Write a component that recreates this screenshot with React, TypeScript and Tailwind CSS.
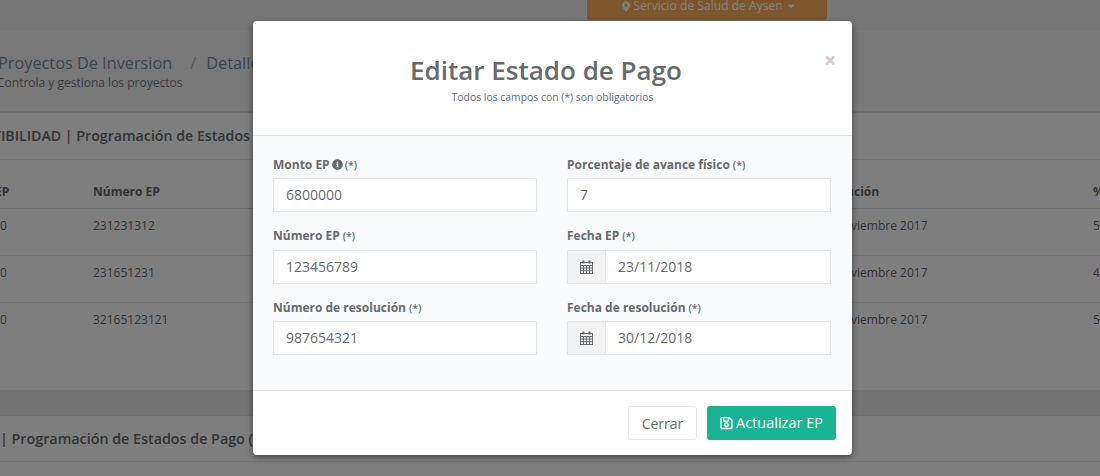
import React from "react";
import { FaMapMarkerAlt, FaCaretDown, FaInfoCircle, FaRegSave } from "react-icons/fa";

const Calendar = () => (
  <svg width="13" height="14" viewBox="0 0 13 14" fill="none" stroke="#676a6c" strokeWidth="1">
    <rect x="0.5" y="2.5" width="12" height="11" />
    <path d="M0.5 5.5h12M0.5 8h12M0.5 10.7h12M3.5 5.5v8M6.5 5.5v8M9.5 5.5v8" />
    <path d="M3.5 0.5v3M9.5 0.5v3" strokeWidth="2" />
  </svg>
);

const Req = () => <span className="text-[10.5px] font-semibold ml-[3px]">(*)</span>;

function Label({ children }: { children: React.ReactNode }) {
  return <label className="block h-[18.5px] mb-[4px] text-[12px] leading-[18.5px] font-bold text-[#676a6c] whitespace-nowrap">{children}</label>;
}

function Field({ label, value, icon }: { label: React.ReactNode; value: string; icon?: boolean }) {
  return (
    <div className="mb-[15px]">
      <Label>{label}</Label>
      <div className="flex h-[34px] border border-[#e5e6e7] bg-white text-[14px] leading-[32px] text-[#676a6c]">
        {icon && (
          <span className="w-[38px] shrink-0 flex items-center justify-center bg-[#f3f3f4] border-r border-[#e5e6e7]">
            <Calendar />
          </span>
        )}
        <span className="px-3">{value}</span>
      </div>
    </div>
  );
}

const rows = [
  ["0", "231231312", "5"],
  ["0", "231651231", "4"],
  ["0", "32165123121", "5"],
];

function BgRow({ a, b, c, d, head, shift }: { a: string; b: string; c: string; d: string; head?: boolean; shift?: boolean }) {
  return (
    <div className={`flex ${head ? "items-end h-[49px] pb-[8px] border-b border-[#dcdee0] font-bold" : "items-start h-[47px] pt-[8px] border-b border-[#e7eaec] last:border-b-0"} text-[12px] leading-[17px] text-[#676a6c] whitespace-nowrap`}>
      <span className={`w-[93px] shrink-0 ${head ? "-ml-[5px]" : ""}`}>{a}</span>
      <span className={`w-[721px] shrink-0 ${head ? "ml-[5px]" : ""}`}>{b}</span>
      <span className={`w-[279px] shrink-0 ${shift ? "pl-[4px]" : ""}`}>{c}</span>
      <span>{d}</span>
    </div>
  );
}

export default function App() {
  return (
    <div className="relative w-[1100px] h-[476px] overflow-hidden bg-[#f3f3f4]" style={{ fontFamily: '"Open Sans", sans-serif' }}>
      <div className="flex justify-end h-[30px] pr-[273px] bg-[#ededee] border-b border-[#e7eaec]">
        <div className="w-[240px] h-[20px] pb-[8px] pl-[4px] flex items-center justify-center gap-[3px] bg-[#f8ac59] rounded-b-[3px] text-white text-[12.1px]">
          <FaMapMarkerAlt className="w-[8px] h-[11px]" />
          <span>Servicio de Salud de Aysen</span>
          <FaCaretDown className="w-[10px] h-[10px]" />
        </div>
      </div>
      <div className="h-[83px] bg-[#f0f0f1] pt-[22px] border-b-2 border-[#e0e0e1] whitespace-nowrap text-[#676a6c]">
        <div className="text-[16.3px] leading-[22px] -ml-[2px]">
          <span className="text-[#7f8a99]">Proyectos De Inversion</span>
          <span className="text-[#b5b8bc] ml-[18px] mr-[10px]">/</span>
          <span className="text-[#7f8a99]">Detalle del proyecto</span>
        </div>
        <div className="text-[12px] leading-[17px] text-[#7a7f88] -ml-[3px]">Controla y gestiona los proyectos</div>
      </div>
      <div className="h-[277px] bg-[#fcfcfc]">
        <div className="h-[47px] -ml-[33px] flex items-center border-b border-[#e7eaec] text-[14.2px] font-semibold text-[#676a6c] whitespace-nowrap">
          FACTIBILIDAD | Programación de Estados de Pago
        </div>
        <div>
          <BgRow a="EP" b="Número EP" c="Resolución" d="%" head />
          {rows.map((r) => (
            <BgRow key={r[1]} a={r[0]} b={r[1]} c="15 Noviembre 2017" d={r[2]} shift />
          ))}
        </div>
      </div>
      <div className="h-[26px] bg-[#e6e6e7] border-b border-[#dcdcdd]" />
      <div className="h-[46px] bg-[#fcfcfc] flex items-center border-b border-[#e7eaec] text-[14.3px] font-semibold text-[#676a6c] whitespace-nowrap">
        | Programación de Estados de Pago (
      </div>
      <div className="h-[20px] bg-[#fcfcfc]" />

      {/* backdrop */}
      <div className="absolute inset-0 bg-black/50" />

      {/* modal */}
      <div className="absolute left-[253px] top-[21px] w-[599px] h-[434px] bg-white rounded-[4px] shadow-[0_2px_6px_rgba(0,0,0,0.5)] overflow-hidden flex flex-col">
        <div className="h-[115px] shrink-0 border-b border-[#e5e5e5] flex flex-col items-center pt-[31px] text-[#676a6c]">
          <h4 className="text-[26px] leading-[36px] font-semibold mr-[13px]">Editar Estado de Pago</h4>
          <small className="text-[10.4px] leading-[16px] mt-[1px] text-[#5f6b80]">Todos los campos con (*) son obligatorios</small>
        </div>
        <span className="absolute right-[16px] top-[27px] text-[21px] leading-[24px] font-bold text-[#cccccc]">×</span>
        <div className="flex-1 bg-[#f8fafb] pt-[19.5px] px-[20px] grid grid-cols-[264px_264px] gap-x-[30px] content-start border-b border-[#e5e5e5]">
          <Field label={<>Monto EP <FaInfoCircle className="inline w-[11px] h-[11px] mb-[2px] -ml-[1px]" /><span className="text-[10.5px] font-semibold ml-[2px]">(*)</span></>} value="6800000" />
          <Field label={<>Porcentaje de avance físico<Req /></>} value="7" />
          <Field label={<>Número EP<Req /></>} value="123456789" />
          <Field label={<>Fecha EP<Req /></>} value="23/11/2018" icon />
          <Field label={<>Número de resolución<Req /></>} value="987654321" />
          <Field label={<>Fecha de resolución<Req /></>} value="30/12/2018" icon />
        </div>
        <div className="h-[64px] shrink-0 flex justify-end items-start gap-[10px] pt-[15px] pr-[16px]">
          <button className="h-[34px] w-[69px] bg-white border border-[#e7eaec] rounded-[3px] text-[14px] text-[#676a6c]">Cerrar</button>
          <button className="h-[34px] w-[129px] bg-[#1ab394] rounded-[3px] text-[14.5px] text-white flex items-center justify-center gap-[3px]">
            <FaRegSave className="w-[13px] h-[14px]" />
            Actualizar EP
          </button>
        </div>
      </div>
    </div>
  );
}
